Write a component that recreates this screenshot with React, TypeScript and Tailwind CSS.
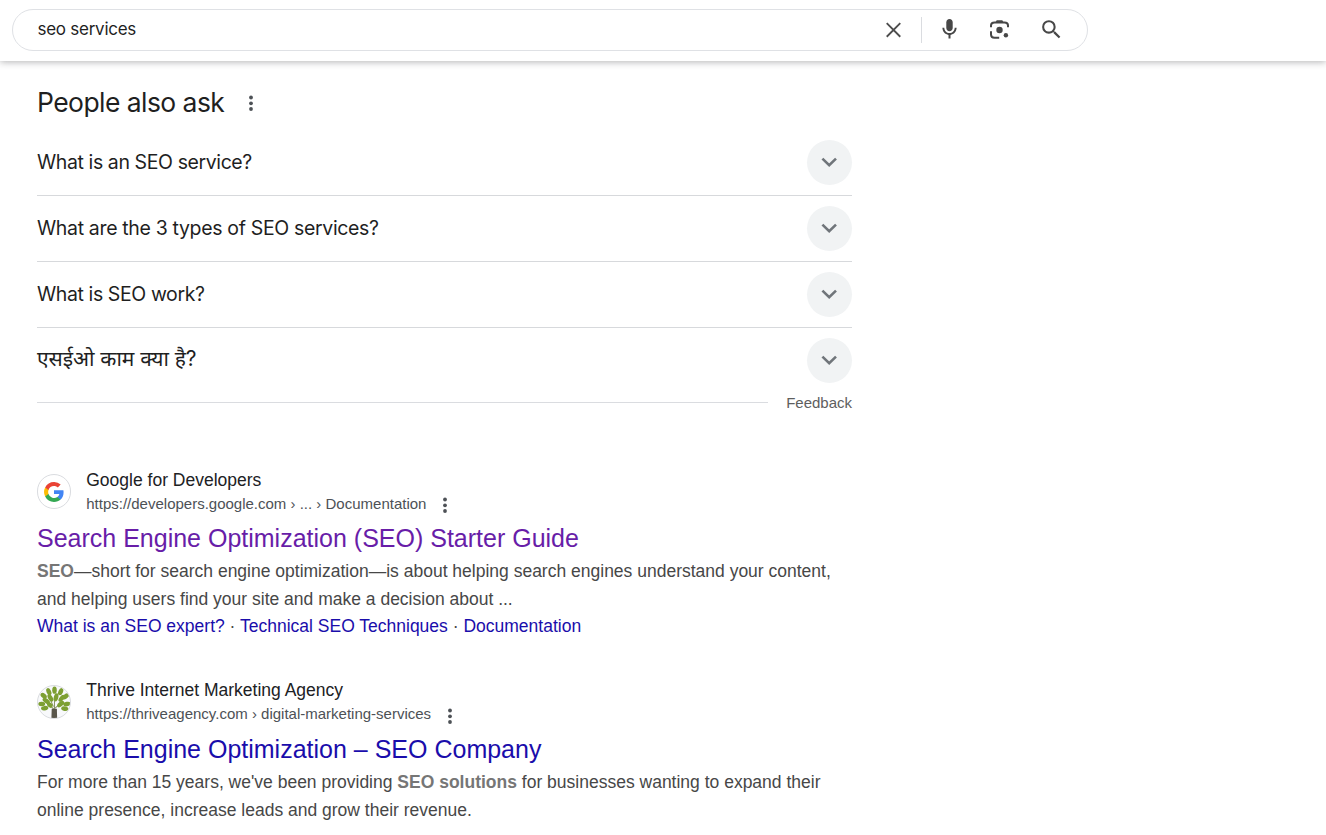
import type { ReactNode } from 'react';

const display = "font-['Inter','Noto_Sans',sans-serif]";

function Dots() {
  return (
    <svg width="20" height="20" viewBox="0 0 20 20" fill="#4d5156" aria-hidden="true">
      <circle cx="10" cy="4.500" r="1.900" />
      <circle cx="10" cy="10.300" r="1.900" />
      <circle cx="10" cy="16" r="1.900" />
    </svg>
  );
}

function ClearIcon() {
  return (
    <svg width="25" height="25" viewBox="0 0 24 24" fill="none" stroke="#4d4d4d" strokeWidth="1.800">
      <path d="M5.500 5 18.500 18M18.500 5 5.500 18" />
    </svg>
  );
}

function MicIcon() {
  return (
    <svg width="24" height="24" viewBox="0 0 24 24" fill="#474747">
      <path d="M11.500 13.300c1.760 0 3.200-1.340 3.200-3.200V4.400c0-1.960-1.340-3.400-3.200-3.400s-3.200 1.440-3.200 3.400v5.700c0 1.860 1.340 3.200 3.200 3.200z" />
      <path d="M16.700 9.800c0 2.960-2.300 5.300-5.200 5.300s-5.200-2.340-5.200-5.300H4.400c0 3.730 2.610 6.630 6.100 7.120v3.480h2v-3.480c3.490-.49 6.100-3.390 6.100-7.120h-1.900z" />
    </svg>
  );
}

function LensIcon() {
  return (
    <svg width="23" height="23" viewBox="0 0 23 23" fill="none" stroke="#474747" strokeWidth="2">
      <path d="M3 9.300V7.500Q3 4.500 6.500 4.500H16.500Q20 4.500 20 7.500V9.300" />
      <path d="M3 13.300V16.500Q3 19.700 6.500 19.700H11.200" />
      <path d="M7.300 4.500 8.700 2.200h5.600L15.700 4.500z" fill="#474747" stroke="none" />
      <circle cx="11.500" cy="12" r="3.200" fill="#474747" stroke="none" />
      <circle cx="17.900" cy="17.300" r="2.200" fill="#474747" stroke="none" />
    </svg>
  );
}

function SearchIcon() {
  return (
    <svg width="25" height="25" viewBox="0 0 24 24" fill="#474747" className="mb-0.5">
      <path d="M15.5 14h-.79l-.28-.27A6.47 6.47 0 0 0 16 9.500 6.500 6.500 0 1 0 9.500 16c1.610 0 3.090-.59 4.230-1.570l.27.28v.79l5 4.990L20.490 19l-4.990-5zm-6 0C7.010 14 5 11.990 5 9.500S7.010 5 9.500 5 14 7.010 14 9.500 11.990 14 9.500 14z" />
    </svg>
  );
}

function Question({ children, textStyle, last }: { children: ReactNode; textStyle: string; last?: boolean }) {
  return (
    <div className={`flex items-center justify-between ${last ? 'h-[65px]' : 'h-[66px] border-b border-[#d7d9dc]'}`}>
      <span className={`leading-7 text-[#1f1f1f] whitespace-nowrap ${display} ${textStyle}`}>{children}</span>
      <span className="flex size-[45px] items-center justify-center rounded-full bg-[#f1f3f4]">
        <svg width="25" height="25" viewBox="0 0 25 25" fill="none" stroke="#70757a" strokeWidth="2.600">
          <path d="M5.400 8.600 12.200 15.200 19 8.600" />
        </svg>
      </span>
    </div>
  );
}

function GoogleMark() {
  return (
    <svg width="20" height="20" viewBox="0 0 24 24">
      <path fill="#4285f4" d="M23.500 12.270c0-.85-.08-1.670-.22-2.450H12v4.640h6.450a5.520 5.520 0 0 1-2.390 3.620v3h3.870c2.260-2.090 3.570-5.170 3.570-8.810z" />
      <path fill="#34a853" d="M12 24c3.240 0 5.960-1.070 7.940-2.910l-3.870-3a7.170 7.170 0 0 1-10.690-3.770H1.380v3.100A12 12 0 0 0 12 24z" />
      <path fill="#fbbc04" d="M5.380 14.320a7.230 7.230 0 0 1 0-4.610V6.610h-4a12 12 0 0 0 0 10.800z" />
      <path fill="#ea4335" d="M12 4.750c1.760 0 3.340.61 4.590 1.800l3.430-3.430A11.500 11.500 0 0 0 12 0 12 12 0 0 0 1.380 6.610l4 3.100A7.170 7.170 0 0 1 12 4.750z" />
    </svg>
  );
}

const leaves: [number, number, number, number][] = [
  [16, 4, 0, 3.6], [10.500, 5.500, -25, 3.600], [22, 5.500, 25, 3.600], [5.500, 9.500, -50, 3.500],
  [27, 10, 50, 3.500], [12, 11.500, -30, 4], [17.500, 11, 15, 4], [23, 12, 40, 4],
  [8, 14.500, -55, 4], [3.600, 17.500, -85, 3.400], [28, 17.500, 78, 3.600], [22, 17.500, 50, 4],
  [11.500, 18.500, -50, 3], [6.500, 21.500, -100, 3.600], [26, 22, 100, 3.600],
];

function TreeMark() {
  return (
    <svg width="33" height="33" viewBox="0 0 32 32" className="shrink-0">
      <path d="M16 29V14M16 23 8 16M16 22l8-7M15 20l-4-9" stroke="#8a9468" strokeWidth="1" fill="none" />
      {leaves.map(([x, y, r, h]) => (
        <ellipse key={`${x}-${y}`} cx={x} cy={y} rx="2.200" ry={h} fill="#7d9f33" transform={`rotate(${r} ${x} ${y})`} />
      ))}
      <path d="M13.300 22h5l.3 10h-5.600z" fill="#59564b" />
    </svg>
  );
}

type ResultProps = {
  icon: ReactNode;
  iconStyle: string;
  site: string;
  url: string;
  dotsStyle: string;
  title: string;
  titleStyle: string;
  children: ReactNode;
};

function Result({ icon, iconStyle, site, url, dotsStyle, title, titleStyle, children }: ResultProps) {
  return (
    <article className="whitespace-nowrap">
      <div className="flex h-[50px] items-center">
        <span className={`mr-[15.25px] flex w-[34px] shrink-0 items-center justify-center overflow-hidden rounded-full border border-[#dadce0] ${iconStyle}`}>
          {icon}
        </span>
        <div>
          <div className="h-[24px] text-[17.5px] leading-[25px] text-[#202124]">{site}</div>
          <div className="flex h-[24px] items-center">
            <span className="pb-px text-[15px] leading-[23px] text-[#4d5156]">{url}</span>
            <span className={`ml-[9px] ${dotsStyle}`}>
              <Dots />
            </span>
          </div>
        </div>
      </div>
      <h3 className={`h-[33px] text-[25px] leading-[33px] ${titleStyle}`}>{title}</h3>
      <div className="mt-[2px] text-[17.5px] leading-7 text-[#474747]">{children}</div>
    </article>
  );
}

export default function App() {
  return (
    <div className="h-[835px] overflow-hidden bg-white font-['Liberation_Sans',Arial,sans-serif]">
      <header className="flex h-[61px] px-3 pt-[9px] shadow-[0_1px_7px_rgba(32,33,36,0.34)]">
        <div className="flex h-[42px] w-[1076px] items-center rounded-full border border-[#dfe1e5] bg-white pl-[24.5px]">
          <span className={`flex-1 pb-0.5 text-[17px] leading-6 tracking-[-0.26px] text-[#1f1f1f] ${display}`}>seo services</span>
          <ClearIcon />
          <span className="ml-[15px] h-[26px] w-px bg-[#dadce0]" />
          <span className="ml-4"><MicIcon /></span>
          <span className="ml-[26px] pb-px"><LensIcon /></span>
          <span className="mr-[23px] ml-[28px]"><SearchIcon /></span>
        </div>
      </header>

      <main className="ml-[37px] w-[815px]">
        <section>
          <div className="flex h-[69px] items-center pt-[15px]">
            <h2 className={`pb-0.5 text-[26.5px] leading-9 tracking-[-0.56px] text-[#1f1f1f] ${display}`}>People also ask</h2>
            <span className="ml-[17px]"><Dots /></span>
          </div>
          <Question textStyle="pb-0.5 text-[19.5px] tracking-[-0.4px]">What is an SEO service?</Question>
          <Question textStyle="pb-0.5 text-[19.5px] tracking-[-0.34px]">What are the 3 types of SEO services?</Question>
          <Question textStyle="pb-0.5 text-[19.5px] tracking-[-0.4px]">What is SEO work?</Question>
          <Question last textStyle="text-[21px] pb-[3px] tracking-[-0.05px]">एसईओ काम क्या है?</Question>
          <div className="flex h-5 items-center">
            <span className="mb-px h-px flex-1 bg-[#dadce0]" />
            <span className="ml-[18px] text-[15px] leading-5 text-[#5e5e5e]">Feedback</span>
          </div>
        </section>

        <div className="mt-[54px]">
          <Result
            icon={<GoogleMark />}
            iconStyle="h-[35px] mb-px bg-white"
            site="Google for Developers"
            url="https://developers.google.com › ... › Documentation"
            dotsStyle="mt-[2px]"
            title="Search Engine Optimization (SEO) Starter Guide"
            titleStyle="mt-[5px] text-[#681da8]"
          >
            <p><b className="text-[#767676]">SEO</b>—short for search engine optimization—is about helping search engines understand your content,</p>
            <p>and helping users find your site and make a decision about ...</p>
            <p className="h-[26px] leading-[26px] text-[#1a0dab]">
              <a>What is an SEO expert?</a>
              <span className="text-[#474747]"> · </span>
              <a>Technical SEO Techniques</a>
              <span className="text-[#474747]"> · </span>
              <a>Documentation</a>
            </p>
          </Result>
        </div>
        <div className="mt-[38px]">
          <Result
            icon={<TreeMark />}
            iconStyle="h-[34px] bg-[#f8f9fb]"
            site="Thrive Internet Marketing Agency"
            url="https://thriveagency.com › digital-marketing-services"
            dotsStyle="mt-[4px]"
            title="Search Engine Optimization – SEO Company"
            titleStyle="mt-[6px] text-[#1a0dab]"
          >
            <p>For more than 15 years, we've been providing <b className="text-[#767676]">SEO solutions</b> for businesses wanting to expand their</p>
            <p>online presence, increase leads and grow their revenue.</p>
          </Result>
        </div>
      </main>
    </div>
  );
}
